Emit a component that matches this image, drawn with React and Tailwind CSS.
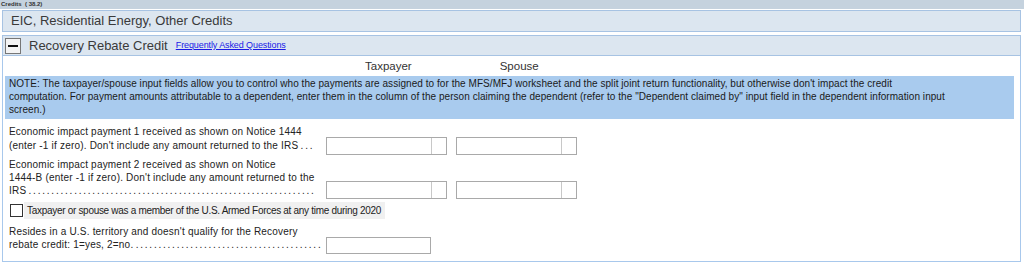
import React from 'react';

const dots = (n) => Array(n).fill(' .').join('');

const Leader = ({ text, count }) => (
    <div className="overflow-hidden whitespace-nowrap">
        {text}
        <span className="tracking-[-0.5px]">{dots(count)}</span>
    </div>
);

const MoneyInput = () => (
    <div className="flex h-[18px] w-[121px] border border-[#a9a9a9] bg-white">
        <div className="flex-1" />
        <div className="w-[15px] border-l border-[#c8c8c8]" />
    </div>
);

const App = () => {
    return (
        <div
            className="w-[1024px] h-[264px] bg-white overflow-hidden text-[#222]"
            style={{ fontFamily: '"Liberation Sans", Arial, sans-serif' }}
        >
            <div className="h-[9px] bg-[#c5d2de] text-[6px] font-bold leading-[9px] pl-[1px] text-[#333]">
                Credits &nbsp;( 38.2)
            </div>
            <div className="pl-[2px] pr-[3px] pt-[1px]">
                <div className="h-[22px] border border-[#a7c3e3] bg-[#dce6f0] flex items-center pl-[8px] text-[13px] text-[#3a3a3a]">
                    EIC, Residential Energy, Other Credits
                </div>
                <div className="mt-[3px] h-[21px] border border-[#a7c3e3] bg-[#dce6f0] flex items-center pl-[2px] text-[13px] text-[#3a3a3a]">
                    <div className="w-[16px] h-[16px] border border-[#777] bg-[#f4f4f4] flex items-center justify-center">
                        <div className="w-[10px] h-[2px] bg-[#111]" />
                    </div>
                    <span className="ml-[8px]">Recovery Rebate Credit</span>
                    <a href="#" className="ml-[8px] text-[9px] tracking-[-0.1px] text-[#1a1ae6] underline">
                        Frequently Asked Questions
                    </a>
                </div>
                <div className="h-[206px] border-l border-r border-b border-[#a8c8ec] px-[2px]">
                    <div className="flex h-[20px] items-end pb-[3px] text-[11.5px] leading-[14px] text-[#333]">
                        <span className="ml-[360px]">Taxpayer</span>
                        <span className="ml-[88px]">Spouse</span>
                    </div>
                    <div className="w-[1009px] bg-[#a9cbee] px-[4px] pt-[1px] pb-[3px] text-[10px] leading-[13px] tracking-[0.05px] text-[#1a1a1a] whitespace-nowrap">
                        NOTE: The taxpayer/spouse input fields allow you to control who the payments are assigned to for the MFS/MFJ worksheet and the split joint return functionality, but otherwise don't impact the credit
                        <br />
                        computation. For payment amounts attributable to a dependent, enter them in the column of the person claiming the dependent (refer to the "Dependent claimed by" input field in the dependent information input
                        <br />
                        screen.)
                    </div>
                    <div className="mt-[6px] flex items-end text-[10px] leading-[14px] tracking-[0.2px]">
                        <div className="w-[318px] pl-[4px]">
                            <div>Economic impact payment 1 received as shown on Notice 1444</div>
                            <Leader text="(enter -1 if zero). Don't include any amount returned to the IRS" count={3} />
                        </div>
                        <div className="ml-[3px] mb-[-2px] flex gap-[9px]">
                            <MoneyInput />
                            <MoneyInput />
                        </div>
                    </div>
                    <div className="mt-[5px] flex items-end text-[10px] leading-[13px] tracking-[0.2px]">
                        <div className="w-[318px] pl-[4px]">
                            <div>Economic impact payment 2 received as shown on Notice</div>
                            <div>1444-B (enter -1 if zero). Don't include any amount returned to the</div>
                            <Leader text="IRS" count={63} />
                        </div>
                        <div className="ml-[3px] mb-[-2px] flex gap-[9px]">
                            <MoneyInput />
                            <MoneyInput />
                        </div>
                    </div>
                    <div className="mt-[5px] flex items-center pl-[5px] text-[10px] tracking-[-0.3px]">
                        <div className="w-[13px] h-[13px] border border-[#333] bg-white" />
                        <div className="ml-[1px] bg-[#f0f0f0] pl-[3px] pr-[4px] h-[17px] flex items-center">
                            Taxpayer or spouse was a member of the U.S. Armed Forces at any time during 2020
                        </div>
                    </div>
                    <div className="mt-[6px] flex items-end text-[10px] leading-[13px] tracking-[0.2px]">
                        <div className="w-[318px] pl-[4px]">
                            <div>Resides in a U.S. territory and doesn't qualify for the Recovery</div>
                            <Leader text="rebate credit: 1=yes, 2=no." count={41} />
                        </div>
                        <div className="ml-[3px] mb-[-3px] h-[17px] w-[105px] border border-[#a9a9a9] bg-white" />
                    </div>
                </div>
            </div>
        </div>
    );
};

export default App;
